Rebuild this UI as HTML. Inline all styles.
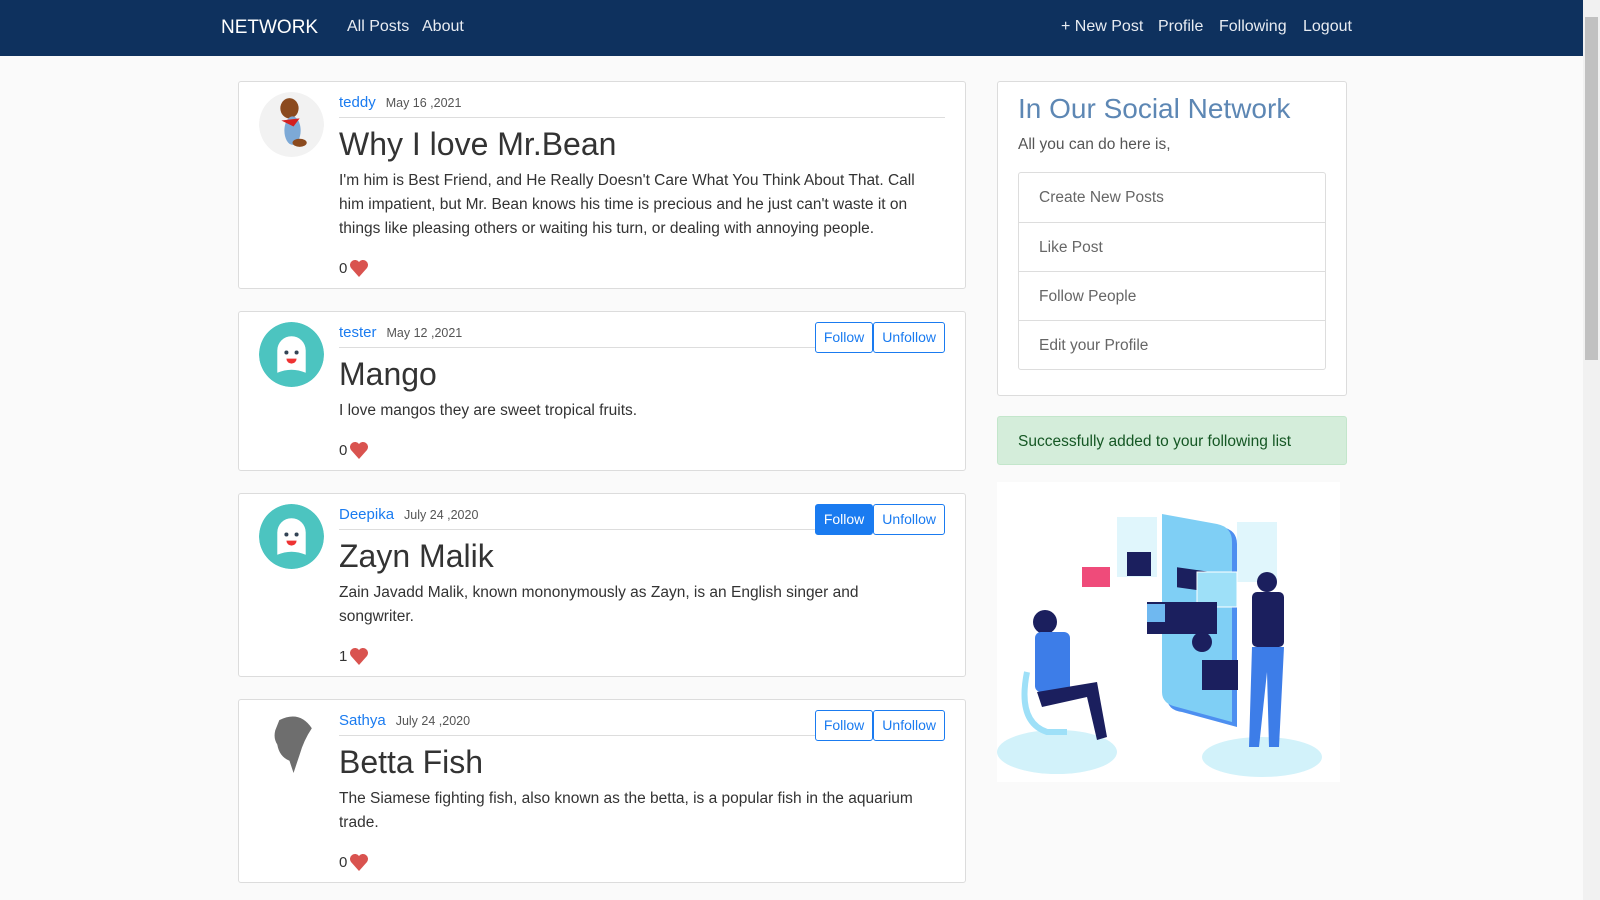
<!DOCTYPE html>
<html><head><meta charset="utf-8"><style>
*{box-sizing:border-box;margin:0;padding:0}
body{width:1600px;height:900px;overflow:hidden;background:#fafafa;font-family:"Liberation Sans",sans-serif;color:#343a40;position:relative}
.nav{position:absolute;left:0;top:0;width:1583px;height:56px;background:#0e315e;color:#fff}
.nav span{position:absolute;top:18px;font-size:16px;color:#e8ecf2}
.brand{font-size:19px!important;color:#fff!important;top:17px!important}
.sb{position:absolute;right:0;top:0;width:17px;height:900px;background:#f1f1f1}
.sb .th{position:absolute;left:2px;top:17px;width:13px;height:343px;background:#c1c1c1}
.card{position:absolute;left:238px;width:728px;background:#fff;border:1px solid #dcdcdc;border-radius:3px}
.av{position:absolute;left:20px;top:10px;width:65px;height:65px;border-radius:50%}
.ct{position:absolute;left:100px;right:20px;top:12px}
.hd{border-bottom:1px solid #ddd;height:24px;font-size:15px}
.hd a{color:#1a7bf0}
.hd small{font-size:12.5px;color:#555;margin-left:10px}
h1{font-weight:normal;font-size:32px;color:#333;margin-top:5px;line-height:42px}
p{font-size:15.5px;line-height:24px;margin-top:4px;color:#333;width:580px}
.lk{position:absolute;left:100px;font-size:15px;color:#333}
.lk svg{vertical-align:-4px;margin-left:2px}
.btns{position:absolute;right:20px;top:10px;display:flex}
.btns div{border:1px solid #1a7bf0;color:#1a7bf0;font-size:14px;height:31px;line-height:29px;padding:0 8px;border-radius:3px;background:#fff}
.btns div.on{background:#1a7bf0;color:#fff}
.side{position:absolute;left:997px;top:81px;width:350px;height:315px;background:#fff;border:1px solid #dcdcdc;border-radius:3px}
.side h2{position:absolute;left:20px;top:11px;font-weight:normal;font-size:28px;color:#5d87b4}
.side .s{position:absolute;left:20px;top:54px;font-size:15.5px;color:#555}
.lg{position:absolute;left:20px;top:90px;width:308px;border:1px solid #ddd;border-radius:3px}
.lg div{height:49px;line-height:50px;padding-left:20px;font-size:15.5px;color:#666;border-top:1px solid #ddd}
.lg div:first-child{border-top:none}
.al{position:absolute;left:997px;top:416px;width:350px;height:49px;background:#d4edda;border:1px solid #c3e6cb;color:#155724;font-size:15.5px;line-height:49px;padding-left:20px;border-radius:3px}
</style></head><body>
<div class="nav">
<span class="brand" style="left:221px">NETWORK</span>
<span style="left:347px">All Posts</span><span style="left:422px">About</span>
<span style="left:1061px">+ New Post</span><span style="left:1158px">Profile</span><span style="left:1219px">Following</span><span style="left:1303px">Logout</span>
</div>
<div class="sb"><div class="th"></div></div>

<div class="card" style="top:81px;height:208px">
<svg class="av" viewBox="0 0 64 64"><circle cx="32" cy="32" r="32" fill="#f2f2f2"/><ellipse cx="30" cy="16" rx="9" ry="10" fill="#8b4a1e"/><ellipse cx="33" cy="38" rx="8" ry="14" fill="#7da9d6"/><path d="M22 28 L40 26 L34 34Z" fill="#d42020"/><ellipse cx="40" cy="50" rx="7" ry="4" fill="#8b4a1e"/></svg>
<div class="ct"><div class="hd"><a>teddy</a><small>May 16 ,2021</small></div>
<h1>Why I love Mr.Bean</h1>
<p>I'm him is Best Friend, and He Really Doesn't Care What You Think About That. Call him impatient, but Mr. Bean knows his time is precious and he just can't waste it on things like pleasing others or waiting his turn, or dealing with annoying people.</p></div>
<div class="lk" style="top:177px">0<svg width="20" height="18" viewBox="0 0 20 18"><path d="M10 18 L2 9 A5 5 0 0 1 10 3 A5 5 0 0 1 18 9Z" fill="#d9534f"/></svg></div>
</div>

<div class="card" style="top:311px;height:160px">
<svg class="av" viewBox="0 0 64 64"><circle cx="32" cy="32" r="32" fill="#4cc4c0"/><path d="M18 50 V28 A14 14 0 0 1 46 28 V50 Q32 44 18 50Z" fill="#fff"/><circle cx="27" cy="30" r="2" fill="#345"/><circle cx="37" cy="30" r="2" fill="#345"/><path d="M27 36 H37 A5 5 0 0 1 27 36Z" fill="#e33"/></svg>
<div class="ct"><div class="hd"><a>tester</a><small>May 12 ,2021</small></div>
<h1>Mango</h1><p>I love mangos they are sweet tropical fruits.</p></div>
<div class="btns"><div>Follow</div><div>Unfollow</div></div>
<div class="lk" style="top:129px">0<svg width="20" height="18" viewBox="0 0 20 18"><path d="M10 18 L2 9 A5 5 0 0 1 10 3 A5 5 0 0 1 18 9Z" fill="#d9534f"/></svg></div>
</div>

<div class="card" style="top:493px;height:184px">
<svg class="av" viewBox="0 0 64 64"><circle cx="32" cy="32" r="32" fill="#4cc4c0"/><path d="M18 50 V28 A14 14 0 0 1 46 28 V50 Q32 44 18 50Z" fill="#fff"/><circle cx="27" cy="30" r="2" fill="#345"/><circle cx="37" cy="30" r="2" fill="#345"/><path d="M27 36 H37 A5 5 0 0 1 27 36Z" fill="#e33"/></svg>
<div class="ct"><div class="hd"><a>Deepika</a><small>July 24 ,2020</small></div>
<h1>Zayn Malik</h1><p>Zain Javadd Malik, known mononymously as Zayn, is an English singer and songwriter.</p></div>
<div class="btns"><div class="on">Follow</div><div>Unfollow</div></div>
<div class="lk" style="top:153px">1<svg width="20" height="18" viewBox="0 0 20 18"><path d="M10 18 L2 9 A5 5 0 0 1 10 3 A5 5 0 0 1 18 9Z" fill="#d9534f"/></svg></div>
</div>

<div class="card" style="top:699px;height:184px">
<svg class="av" viewBox="0 0 64 64"><path d="M20 10 Q40 0 52 18 Q44 30 40 44 L34 62 L30 50 Q20 46 18 34 Q14 28 16 20Z" fill="#555" opacity=".85"/></svg>
<div class="ct"><div class="hd"><a>Sathya</a><small>July 24 ,2020</small></div>
<h1>Betta Fish</h1><p>The Siamese fighting fish, also known as the betta, is a popular fish in the aquarium trade.</p></div>
<div class="btns"><div>Follow</div><div>Unfollow</div></div>
<div class="lk" style="top:153px">0<svg width="20" height="18" viewBox="0 0 20 18"><path d="M10 18 L2 9 A5 5 0 0 1 10 3 A5 5 0 0 1 18 9Z" fill="#d9534f"/></svg></div>
</div>

<div class="side"><h2>In Our Social Network</h2><div class="s">All you can do here is,</div>
<div class="lg"><div>Create New Posts</div><div>Like Post</div><div>Follow People</div><div>Edit your Profile</div></div></div>
<div class="al">Successfully added to your following list</div>

<svg style="position:absolute;left:997px;top:482px" width="343" height="300" viewBox="0 0 343 300">
<rect width="343" height="300" fill="#fff"/>
<ellipse cx="60" cy="270" rx="60" ry="22" fill="#d2f2fa"/>
<ellipse cx="265" cy="275" rx="60" ry="20" fill="#d2f2fa"/>
<rect x="120" y="35" width="40" height="60" fill="#e0f6fc"/>
<rect x="240" y="40" width="40" height="60" fill="#e0f6fc"/>
<path d="M170 35 L225 45 Q240 48 240 62 L240 245 L185 230 Q170 228 170 215Z" fill="#4d8ff0"/>
<path d="M165 32 L220 42 Q235 45 235 60 L235 240 L180 225 Q165 222 165 210Z" fill="#7fcff5"/>
<rect x="180" y="60" width="55" height="20" fill="#1b1f5e" transform="skewY(8)"/>
<rect x="200" y="90" width="40" height="35" fill="#9ee0f8" stroke="#fff"/>
<rect x="150" y="120" width="70" height="32" fill="#1b1f5e"/>
<rect x="150" y="122" width="18" height="18" fill="#6fb8f0"/>
<rect x="85" y="85" width="28" height="20" fill="#ef4b7a"/>
<rect x="130" y="70" width="24" height="24" fill="#1b1f5e"/>
<circle cx="205" cy="160" r="10" fill="#1b1f5e"/>
<rect x="205" y="178" width="36" height="30" fill="#1b1f5e"/>
<circle cx="48" cy="140" r="12" fill="#1b1f5e"/>
<rect x="38" y="150" width="35" height="60" rx="6" fill="#3d7de8"/>
<path d="M40 210 L100 200 L110 255 L100 258 L90 215 L45 225Z" fill="#1b1f5e"/>
<path d="M30 190 Q20 240 50 250 L70 250" stroke="#9ee0f8" stroke-width="6" fill="none"/>
<circle cx="270" cy="100" r="10" fill="#1b1f5e"/>
<rect x="255" y="110" width="32" height="55" rx="5" fill="#1b1f5e"/>
<path d="M255 165 L287 165 L282 265 L272 265 L270 190 L262 265 L252 265Z" fill="#3d7de8"/>
</svg>
</body></html>
